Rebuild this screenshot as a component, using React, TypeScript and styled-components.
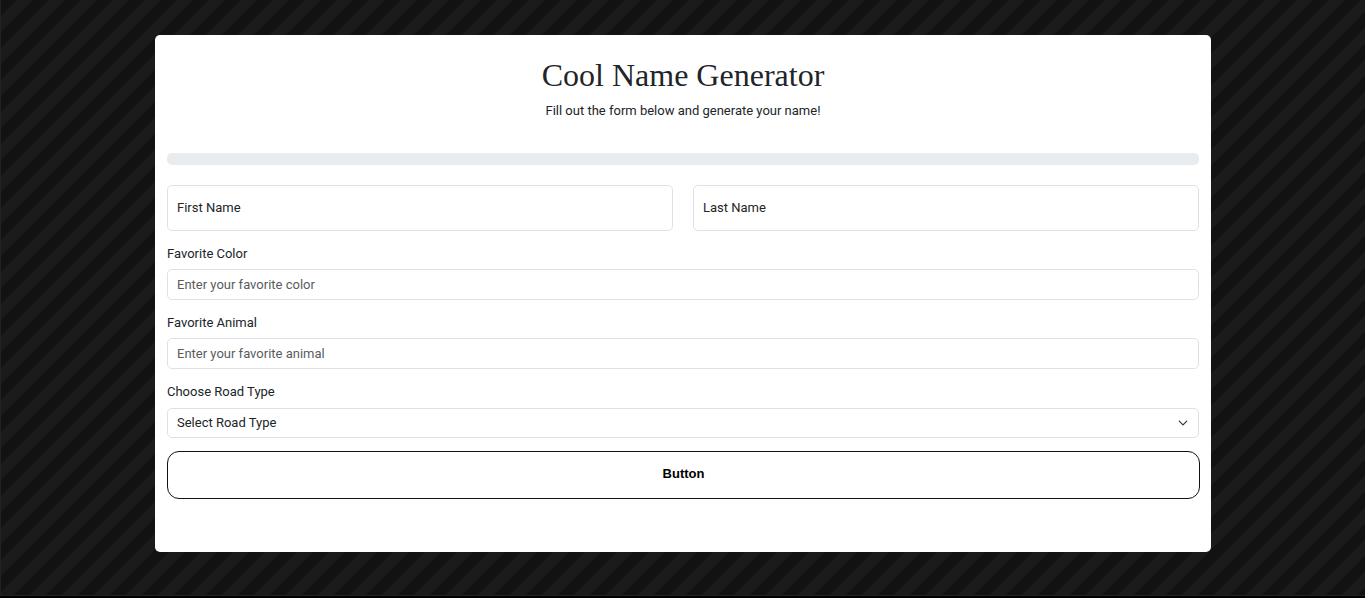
import React from "react";
import styled, { createGlobalStyle } from "styled-components";

const GlobalStyle = createGlobalStyle`
  *, *::before, *::after { box-sizing: border-box; }
  body {
    margin: 0;
    background: #000;
    color: #212529;
    font-family: Roboto, "Liberation Sans", sans-serif;
    font-size: 13px;
    line-height: 20px;
  }
`;

const Page = styled.main`
  min-height: calc(100vh - 2px);
  padding: 35px 12px 43px;
  border-left: 1px solid #222;
  border-bottom: 1px solid #222;
  background: linear-gradient(
    135deg, #121212 25%, #1b1b1b 25% 50%, #121212 50% 75%, #1b1b1b 75%
  ) 0 0 / 32px 32px border-box;
  background-origin: border-box;
`;

const Card = styled.section`
  max-width: 1056px;
  margin: 0 auto;
  padding: 20px 12px 53px;
  border-radius: 5px;
  background: #fff;
`;

const Title = styled.h1`
  margin: 0 0 6px;
  font: 400 32px/40px "Liberation Serif", serif;
  text-align: center;
`;

const Intro = styled.p`
  margin: 0 0 32px;
  text-align: center;
`;

const Progress = styled.div`
  height: 12px;
  margin-bottom: 20px;
  border-radius: 5px;
  background: #e9ecef;
`;

const Form = styled.form`
  display: flex;
  flex-direction: column;
  gap: 13px;
`;

const NameRow = styled.div`
  display: grid;
  grid-template-columns: 1fr 1fr;
  gap: 20px;
`;

const Field = styled.div<{ $gap?: number }>`
  display: flex;
  flex-direction: column;
  gap: ${(p) => p.$gap ?? 5}px;
`;

const Label = styled.label`
  display: block;
`;

const Input = styled.input<{ $tall?: boolean }>`
  display: block;
  width: 100%;
  height: ${(p) => (p.$tall ? 46 : 31)}px;
  padding: ${(p) => (p.$tall ? "0 9px 2px" : "0 9px")};
  border: 1px solid #dee2e6;
  border-radius: 5px;
  background: #fff;
  color: #212529;
  font: inherit;
  &::placeholder {
    color: ${(p) => (p.$tall ? "#212529" : "#595c5f")};
    opacity: 1;
  }
`;

const SelectWrap = styled.div`
  display: grid;
  align-items: center;
  > * { grid-area: 1 / 1; }
  > svg { justify-self: end; margin-right: 11px; pointer-events: none; }
`;

const Select = styled.select`
  appearance: none;
  width: 100%;
  height: 30px;
  padding: 0 30px 0 9px;
  border: 1px solid #dee2e6;
  border-radius: 5px;
  background: #fff;
  color: #212529;
  font: inherit;
`;

const Submit = styled.button`
  height: 48px;
  margin-right: -1px;
  padding: 0 12px 2px;
  border: 1px solid #111;
  border-radius: 12px;
  background: #fff;
  color: #000;
  font: 700 13px/20px "Liberation Sans", sans-serif;
`;

export default function App() {
  return (
    <>
      <GlobalStyle />
      <Page>
        <Card>
          <Title>Cool Name Generator</Title>
          <Intro>Fill out the form below and generate your name!</Intro>
          <Progress role="progressbar" aria-label="Form progress" aria-valuenow={0} aria-valuemin={0} aria-valuemax={100} />
          <Form onSubmit={(e) => e.preventDefault()}>
            <NameRow>
              <Input $tall id="first" aria-label="First Name" placeholder="First Name" />
              <Input $tall id="last" aria-label="Last Name" placeholder="Last Name" />
            </NameRow>
            <Field>
              <Label htmlFor="color">Favorite Color</Label>
              <Input id="color" placeholder="Enter your favorite color" />
            </Field>
            <Field>
              <Label htmlFor="animal">Favorite Animal</Label>
              <Input id="animal" placeholder="Enter your favorite animal" />
            </Field>
            <Field $gap={6}>
              <Label htmlFor="road">Choose Road Type</Label>
              <SelectWrap>
                <Select id="road" defaultValue="">
                  <option value="">Select Road Type</option>
                </Select>
                <svg width="10" height="10" viewBox="0 0 16 16" aria-hidden="true">
                  <path d="m2 5 6 6 6-6" fill="none" stroke="#343a40" strokeWidth="2" strokeLinecap="round" strokeLinejoin="round" />
                </svg>
              </SelectWrap>
            </Field>
            <Submit type="submit">Button</Submit>
          </Form>
        </Card>
      </Page>
    </>
  );
}
